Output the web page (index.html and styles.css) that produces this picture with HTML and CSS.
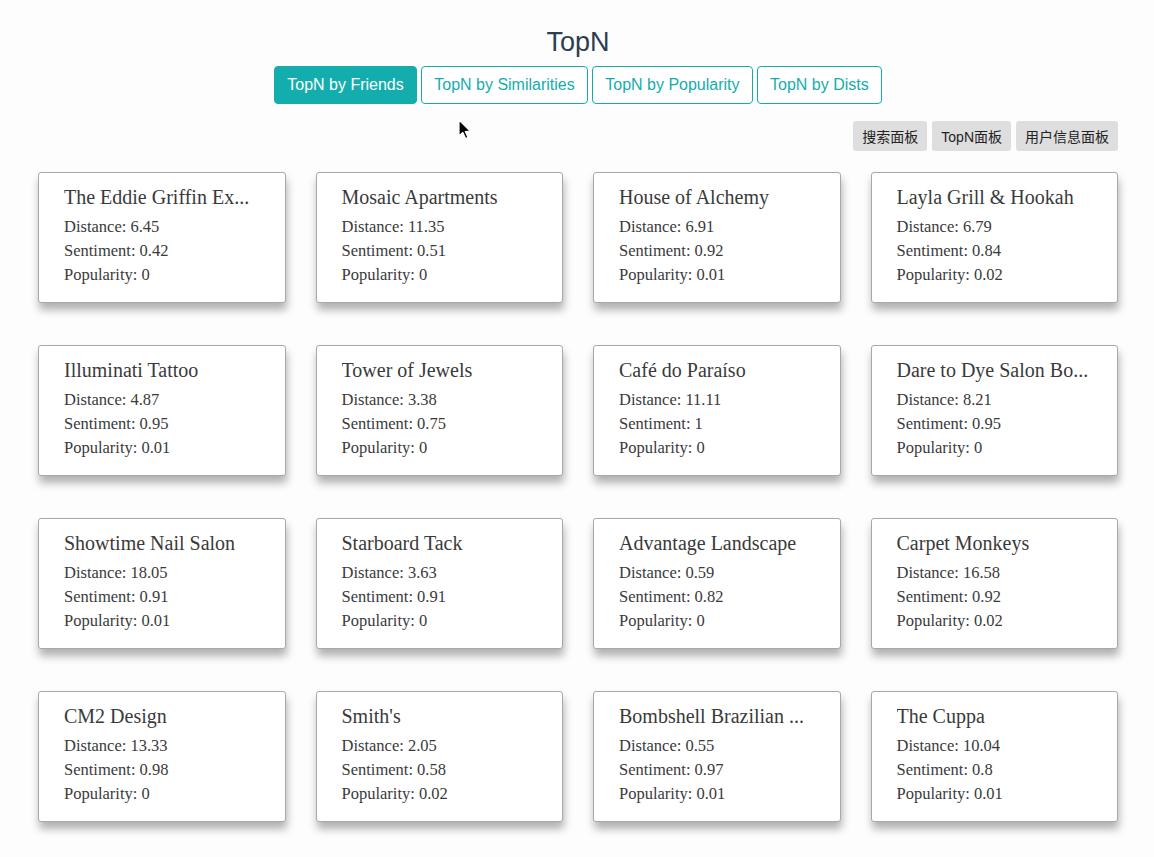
FILE: index.html
```html
<!DOCTYPE html>
<html lang="en">
<head>
<meta charset="utf-8">
<title>TopN</title>
<link rel="stylesheet" href="styles.css">
</head>
<body>
<div class="app">
  <h1 class="title">TopN</h1>
  <div class="tabs">
    <button class="tab active">TopN by Friends</button>
    <button class="tab">TopN by Similarities</button>
    <button class="tab">TopN by Popularity</button>
    <button class="tab">TopN by Dists</button>
  </div>
  <div class="panels">
    <button class="panel-btn">搜索面板</button>
    <button class="panel-btn">TopN面板</button>
    <button class="panel-btn">用户信息面板</button>
  </div>
  <div class="grid">
    <div class="card"><div class="name">The Eddie Griffin Ex...</div><div class="line">Distance: 6.45</div><div class="line">Sentiment: 0.42</div><div class="line">Popularity: 0</div></div>
    <div class="card"><div class="name">Mosaic Apartments</div><div class="line">Distance: 11.35</div><div class="line">Sentiment: 0.51</div><div class="line">Popularity: 0</div></div>
    <div class="card"><div class="name">House of Alchemy</div><div class="line">Distance: 6.91</div><div class="line">Sentiment: 0.92</div><div class="line">Popularity: 0.01</div></div>
    <div class="card"><div class="name">Layla Grill &amp; Hookah</div><div class="line">Distance: 6.79</div><div class="line">Sentiment: 0.84</div><div class="line">Popularity: 0.02</div></div>

    <div class="card"><div class="name">Illuminati Tattoo</div><div class="line">Distance: 4.87</div><div class="line">Sentiment: 0.95</div><div class="line">Popularity: 0.01</div></div>
    <div class="card"><div class="name">Tower of Jewels</div><div class="line">Distance: 3.38</div><div class="line">Sentiment: 0.75</div><div class="line">Popularity: 0</div></div>
    <div class="card"><div class="name">Café do Paraíso</div><div class="line">Distance: 11.11</div><div class="line">Sentiment: 1</div><div class="line">Popularity: 0</div></div>
    <div class="card"><div class="name">Dare to Dye Salon Bo...</div><div class="line">Distance: 8.21</div><div class="line">Sentiment: 0.95</div><div class="line">Popularity: 0</div></div>

    <div class="card"><div class="name">Showtime Nail Salon</div><div class="line">Distance: 18.05</div><div class="line">Sentiment: 0.91</div><div class="line">Popularity: 0.01</div></div>
    <div class="card"><div class="name">Starboard Tack</div><div class="line">Distance: 3.63</div><div class="line">Sentiment: 0.91</div><div class="line">Popularity: 0</div></div>
    <div class="card"><div class="name">Advantage Landscape</div><div class="line">Distance: 0.59</div><div class="line">Sentiment: 0.82</div><div class="line">Popularity: 0</div></div>
    <div class="card"><div class="name">Carpet Monkeys</div><div class="line">Distance: 16.58</div><div class="line">Sentiment: 0.92</div><div class="line">Popularity: 0.02</div></div>

    <div class="card"><div class="name">CM2 Design</div><div class="line">Distance: 13.33</div><div class="line">Sentiment: 0.98</div><div class="line">Popularity: 0</div></div>
    <div class="card"><div class="name">Smith's</div><div class="line">Distance: 2.05</div><div class="line">Sentiment: 0.58</div><div class="line">Popularity: 0.02</div></div>
    <div class="card"><div class="name">Bombshell Brazilian ...</div><div class="line">Distance: 0.55</div><div class="line">Sentiment: 0.97</div><div class="line">Popularity: 0.01</div></div>
    <div class="card"><div class="name">The Cuppa</div><div class="line">Distance: 10.04</div><div class="line">Sentiment: 0.8</div><div class="line">Popularity: 0.01</div></div>
  </div>
</div>
<svg class="cursor" width="14" height="22" viewBox="0 0 14 22"><path d="M1 1 L1 17 L4.8 13.4 L7.6 19.6 L10 18.5 L7.3 12.5 L12.4 12.2 Z" fill="#000" stroke="#fff" stroke-width="1.2" stroke-linejoin="round"/></svg>
</body>
</html>
```
FILE: styles.css
```css
html, body {
  margin: 0;
  padding: 0;
  background: #fdfdfd;
}
body {
  font-family: "Liberation Sans", Arial, sans-serif;
  color: #2c3e50;
}
.app {
  width: 1080px;
  margin: 0 0 0 38px;
  padding-bottom: 30px;
}
.title {
  margin: 27px 0 9px;
  font-size: 27px;
  line-height: 30px;
  font-weight: 400;
  text-align: center;
  color: #2c3e50;
}
.tabs {
  display: flex;
  justify-content: center;
  gap: 4px;
}
.tab {
  font-family: "Liberation Sans", Arial, sans-serif;
  font-size: 16px;
  line-height: 24px;
  padding: 6px 12.25px;
  border: 1px solid #14adad;
  border-radius: 4px;
  background: #fff;
  color: #14adad;
  cursor: pointer;
}
.tab.active {
  background: #14adad;
  color: #fff;
}
.panels {
  display: flex;
  justify-content: flex-end;
  gap: 5px;
  margin-top: 17px;
}
.panel-btn {
  font-family: "Liberation Sans", "Noto Sans CJK SC", sans-serif;
  font-size: 14px;
  height: 30px;
  padding: 0 9px;
  border: none;
  border-radius: 3px;
  background: #dedede;
  color: #222;
}
.grid {
  display: grid;
  grid-template-columns: repeat(4, 1fr);
  column-gap: 30px;
  row-gap: 42px;
  margin-top: 21px;
}
.card {
  background: #fff;
  border: 1px solid #a8a8a8;
  border-radius: 3px;
  padding: 12px 25px 15px;
  box-shadow: 1px 7px 8px rgba(0, 0, 0, 0.3);
  font-family: "Liberation Serif", "Times New Roman", serif;
  color: #3a3a3a;
}
.name {
  font-size: 20px;
  line-height: 24px;
  white-space: nowrap;
  overflow: hidden;
  margin-bottom: 6px;
}
.line {
  font-size: 16.5px;
  line-height: 24px;
}
.cursor {
  position: absolute;
  left: 458px;
  top: 119px;
}
```
